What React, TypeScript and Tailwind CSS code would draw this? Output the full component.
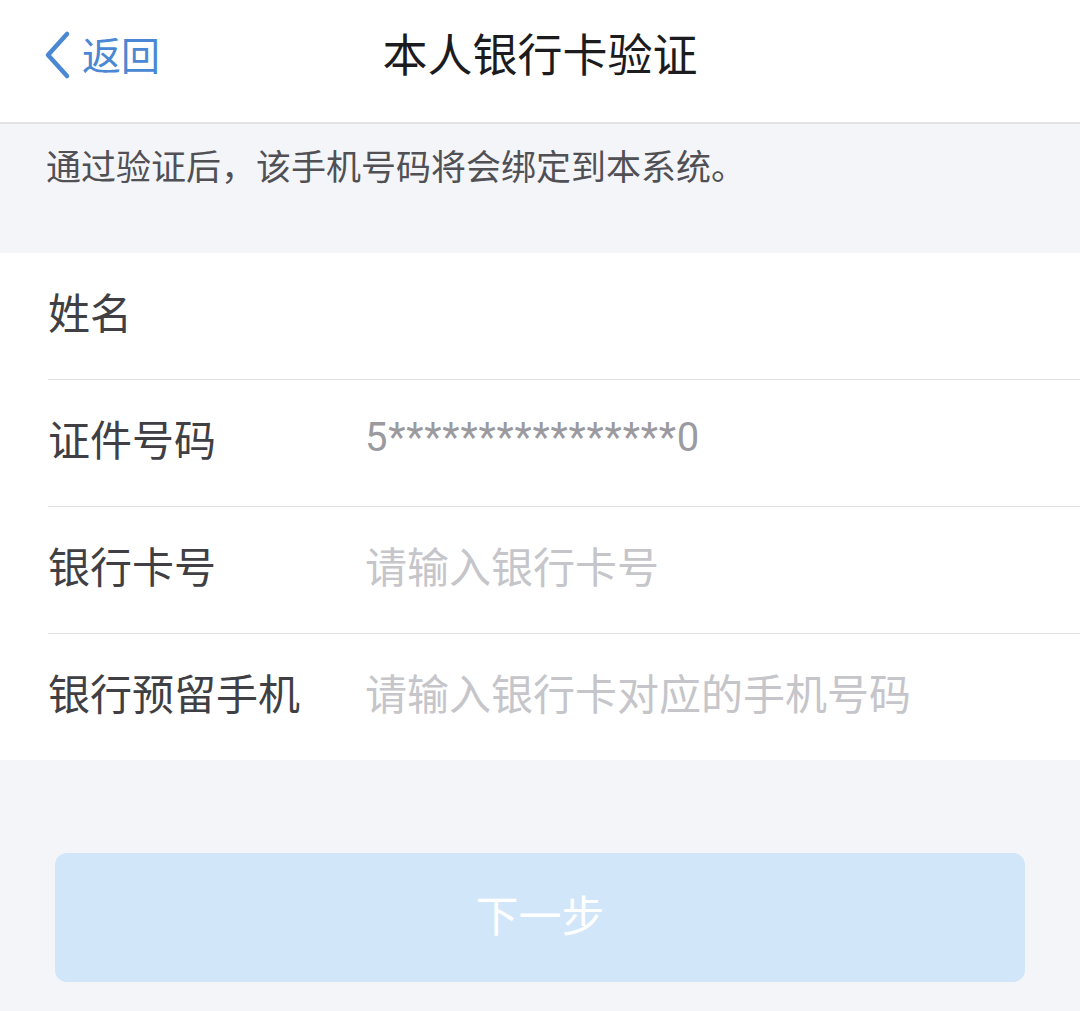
const cjk = "font-['Noto_Sans_CJK_SC',sans-serif]";

const rows = [
  { label: "姓名", value: "", kind: "value" },
  { label: "证件号码", value: "5****************0", kind: "value" },
  { label: "银行卡号", value: "请输入银行卡号", kind: "placeholder" },
  { label: "银行预留手机", value: "请输入银行卡对应的手机号码", kind: "placeholder" },
];

export default function App() {
  return (
    <div className={`flex min-h-[1011px] w-[1080px] flex-col bg-[#f4f5f9] ${cjk}`}>
      {/* nav bar */}
      <header className="relative flex h-[124px] shrink-0 items-center justify-center border-b-2 border-[#e3e3e6] bg-white">
        <div className="absolute left-[42px] top-[30px] flex items-center gap-[10px] text-[#4a88d4]">
          <svg width="30" height="50" viewBox="0 0 30 50" fill="none" aria-hidden="true">
            <path d="M25 4 L6 25 L25 46" stroke="currentColor" strokeWidth="4.5" strokeLinecap="round" strokeLinejoin="round" />
          </svg>
          <span className="pb-[4px] text-[39px] leading-none">返回</span>
        </div>
        <h1 className="pb-[18px] text-[45px] leading-none text-[#1c1c1e]">本人银行卡验证</h1>
      </header>

      {/* notice */}
      <div className="flex h-[129px] shrink-0 items-start px-[46px] pt-[19px]">
        <p className="text-[35px] leading-[44px] text-[#505055]">通过验证后，该手机号码将会绑定到本系统。</p>
      </div>

      {/* form */}
      <section className="flex flex-col bg-white">
        {rows.map((row, i) => (
          <div key={row.label} className="pl-[48px]">
            <div
              className={`flex items-center pb-[10px] ${i < rows.length - 1 ? "h-[127px] border-b border-[#e1e1e4]" : "h-[126px]"}`}
            >
              <span className="w-[317px] shrink-0 text-[42px] leading-none text-[#404044]">{row.label}</span>
              {row.kind === "placeholder" ? (
                <span className="text-[42px] leading-none text-[#c5c5ca]">{row.value}</span>
              ) : (
                <span className="font-['Roboto',sans-serif] text-[40px] leading-none tracking-[0.8px] text-[#9a9a9f]">
                  {row.value}
                </span>
              )}
            </div>
          </div>
        ))}
      </section>

      {/* action */}
      <div className="px-[55px] pt-[93px]">
        <button
          type="button"
          className="flex h-[129px] w-full items-center justify-center rounded-[12px] bg-[#d2e6f9] pb-[8px] text-[43px] leading-none text-white"
        >
          下一步
        </button>
      </div>
    </div>
  );
}
